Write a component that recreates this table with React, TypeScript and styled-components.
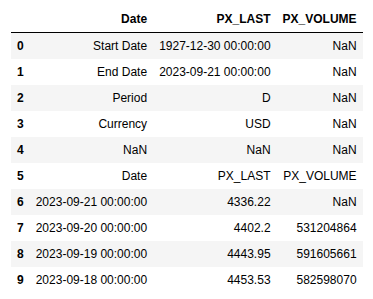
import React from 'react'
import styled, { createGlobalStyle } from 'styled-components'

const GlobalStyle = createGlobalStyle`
  html, body {
    margin: 0;
    padding: 0;
    background: #fff;
  }
`

const Table = styled.table`
  margin: 6px 0 0 11px;
  border-collapse: collapse;
  border-spacing: 0;
  border: none;
  color: #000;
  font-family: 'Liberation Sans', Arial, sans-serif;
  font-size: 12px;
  line-height: 14px;
`
const Head = styled.thead`
  border-bottom: 1px solid #000;
  vertical-align: bottom;
`
const Row = styled.tr`
  &:nth-child(odd) {
    background: #f5f5f5;
  }
`
const HeadCell = styled.th`
  text-align: ${(p: { left?: boolean }) => (p.left ? 'left' : 'right')};
  font-weight: bold;
  padding: 6px;
  white-space: nowrap;
  vertical-align: middle;
`
const Cell = styled.td`
  text-align: right;
  padding: 6px;
  white-space: nowrap;
  vertical-align: middle;
`

const rows: [string, string, string][] = [
  ['Start Date', '1927-12-30 00:00:00', 'NaN'],
  ['End Date', '2023-09-21 00:00:00', 'NaN'],
  ['Period', 'D', 'NaN'],
  ['Currency', 'USD', 'NaN'],
  ['NaN', 'NaN', 'NaN'],
  ['Date', 'PX_LAST', 'PX_VOLUME'],
  ['2023-09-21 00:00:00', '4336.22', 'NaN'],
  ['2023-09-20 00:00:00', '4402.2', '531204864'],
  ['2023-09-19 00:00:00', '4443.95', '591605661'],
  ['2023-09-18 00:00:00', '4453.53', '582598070']
]

const App = () => (
  <>
    <GlobalStyle />
    <Table>
      <Head>
        <tr>
          <HeadCell />
          <HeadCell>Date</HeadCell>
          <HeadCell>PX_LAST</HeadCell>
          <HeadCell>PX_VOLUME</HeadCell>
        </tr>
      </Head>
      <tbody>
        {rows.map((r, i) => (
          <Row key={i}>
            <HeadCell left>{i}</HeadCell>
            <Cell>{r[0]}</Cell>
            <Cell>{r[1]}</Cell>
            <Cell>{r[2]}</Cell>
          </Row>
        ))}
      </tbody>
    </Table>
  </>
)

export default App
